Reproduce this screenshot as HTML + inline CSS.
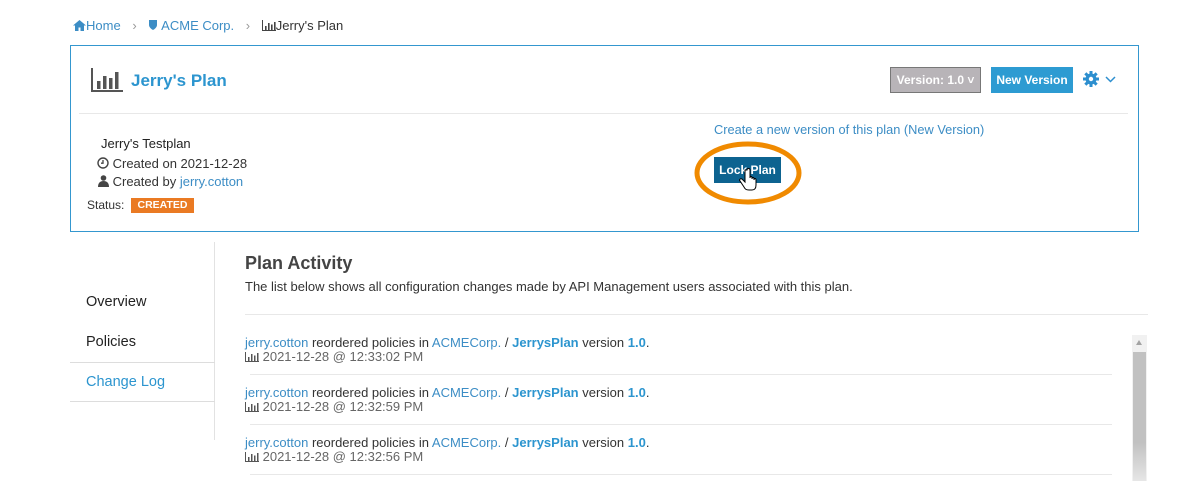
<!DOCTYPE html>
<html><head><meta charset="utf-8"><style>
*{margin:0;padding:0;box-sizing:border-box}
body{width:1183px;height:481px;background:#fff;font-family:"Liberation Sans",sans-serif;color:#333;position:relative;overflow:hidden;font-size:13px}
.a{position:absolute;white-space:nowrap}
.b{color:#3c8dc5}
.bl{color:#2c95cf}
.ic{display:inline-block;vertical-align:-1px}
.e1{font-size:13px;color:#333;letter-spacing:0}
.e2{font-size:13px;color:#666;letter-spacing:0}
.sep{position:absolute;height:1px;background:#e8e8e8}
</style></head><body>
<div class="a" style="left:73px;top:18px;font-size:13px">
<span class="b"><svg class="ic" width="13" height="11" viewBox="0 0 13 11"><path d="M6.5 0L0 5.5h2V11h3.5V7.5h2V11H11V5.5h2z" fill="#3c8dc5"/></svg>Home</span>
<span style="color:#999;margin:0 8px">›</span>
<span class="b"><svg class="ic" width="10" height="12" viewBox="0 0 10 12"><path d="M1 1h8v5c0 3-4 5-4 5S1 9 1 6z" fill="#3c8dc5"/></svg> ACME Corp.</span>
<span style="color:#999;margin:0 8px">›</span>
<span><svg class="ic" width="14" height="11" viewBox="0 0 14 11"><path d="M0.5 0v10.5H14" stroke="#444" fill="none"/><rect x="3" y="6" width="1.6" height="4" fill="#444"/><rect x="6" y="3" width="1.6" height="7" fill="#444"/><rect x="9" y="4.5" width="1.6" height="5.5" fill="#444"/><rect x="12" y="2" width="1.6" height="8" fill="#444"/></svg>Jerry's Plan</span>
</div>
<div class="a" style="left:70px;top:45px;width:1069px;height:187px;border:1px solid #3497cf"></div>
<svg class="a" style="left:91px;top:68px" width="32" height="24" viewBox="0 0 32 24"><path d="M1 0v23h31" stroke="#555" stroke-width="2" fill="none"/><rect x="6" y="13" width="3.5" height="8" fill="#555"/><rect x="12" y="8" width="3.5" height="13" fill="#555"/><rect x="18" y="10" width="3.5" height="11" fill="#555"/><rect x="24" y="4" width="3.5" height="17" fill="#555"/></svg>
<div class="a bl" style="left:131px;top:71px;font-size:17px;font-weight:bold">Jerry's Plan</div>
<div class="a" style="left:890px;top:67px;width:91px;height:26px;background:#b8b4b8;border:1px solid #777;color:#fff;font-weight:bold;font-size:12px;line-height:24px;text-align:center">Version: 1.0 ˅</div>
<div class="a" style="left:991px;top:67px;width:82px;height:26px;background:#2d9bd2;color:#fff;font-weight:bold;font-size:12px;line-height:26px;text-align:center">New Version</div>
<svg class="a" style="left:1083px;top:71px" width="16" height="16" viewBox="0 0 16 16"><g fill="#2d8fcf"><circle cx="8" cy="8" r="5.5"/><rect x="6.5" y="0" width="3" height="16"/><rect x="0" y="6.5" width="16" height="3"/><rect x="6.5" y="0" width="3" height="16" transform="rotate(45 8 8)"/><rect x="6.5" y="0" width="3" height="16" transform="rotate(-45 8 8)"/></g><circle cx="8" cy="8" r="2.2" fill="#fff"/></svg>
<svg class="a" style="left:1105px;top:76px" width="11" height="7" viewBox="0 0 11 7"><path d="M1 1l4.5 4.5L10 1" stroke="#2d8fcf" stroke-width="1.5" fill="none"/></svg>
<div class="sep" style="left:79px;top:113px;width:1049px"></div>
<div class="a" style="left:101px;top:136px;font-size:13px;color:#222">Jerry's Testplan</div>
<div class="a" style="left:97px;top:156px;font-size:13px;color:#333"><svg class="ic" width="12" height="12" viewBox="0 0 12 12"><circle cx="6" cy="6" r="5" stroke="#444" stroke-width="1.4" fill="none"/><path d="M6 3v3.2H4" stroke="#444" stroke-width="1.3" fill="none"/></svg> Created on 2021-12-28</div>
<div class="a" style="left:98px;top:174px;font-size:13px;color:#333"><svg class="ic" width="11" height="12" viewBox="0 0 11 12"><circle cx="5.5" cy="3" r="2.8" fill="#444"/><path d="M0 12c0-4 2-6 5.5-6S11 8 11 12z" fill="#444"/></svg> Created by <span class="b">jerry.cotton</span></div>
<div class="a" style="left:87px;top:198px;font-size:12px;color:#333">Status:</div>
<div class="a" style="left:131px;top:198px;width:63px;height:15px;background:#ea7a23;color:#fff;font-weight:bold;font-size:10.5px;line-height:15px;text-align:center">CREATED</div>
<div class="a b" style="left:714px;top:122px;font-size:12.8px">Create a new version of this plan (New Version)</div>
<div class="a" style="left:714px;top:157px;width:67px;height:26px;background:#0d6390;color:#fff;font-weight:bold;font-size:12px;line-height:26px;text-align:center">Lock Plan</div>
<svg class="a" style="left:693px;top:140px" width="110" height="66" viewBox="0 0 110 66"><ellipse cx="55" cy="33" rx="51" ry="29" stroke="#f08a00" stroke-width="5" fill="none"/><path d="M52 30v12l-3-3c-2-1-3 1-2 2l4 6c1 2 2 3 5 3h3c3 0 4-2 4-5v-5c0-2-2-2-2 0v-1c0-2-2-2-2 0v-1c0-2-2-2-2 0V30c0-2-3-2-3 0z" fill="#fff" stroke="#000" stroke-width="1"/></svg>
<div class="a" style="left:214px;top:242px;width:1px;height:198px;background:#e2e2e2"></div>
<div class="a" style="left:86px;top:294px;font-size:14.5px;color:#222">Overview</div>
<div class="a" style="left:86px;top:334px;font-size:14.5px;color:#222">Policies</div>
<div class="sep" style="left:70px;top:362px;width:145px;background:#ddd"></div>
<div class="a bl" style="left:86px;top:374px;font-size:14.5px">Change Log</div>
<div class="sep" style="left:70px;top:401px;width:145px;background:#ddd"></div>
<div class="a" style="left:245px;top:253px;font-size:18px;font-weight:bold;color:#444">Plan Activity</div>
<div class="a" style="left:245px;top:279px;font-size:13px;color:#333">The list below shows all configuration changes made by API Management users associated with this plan.</div>
<div class="sep" style="left:245px;top:314px;width:903px"></div>

<div class="a e1" style="left:245px;top:335px"><span class="b">jerry.cotton</span> reordered policies in <span class="b">ACMECorp.</span> / <b class="bl">JerrysPlan</b> version <b class="bl">1.0</b>.</div>
<div class="a e2" style="left:245px;top:349px"><svg class="ic" width="14" height="10" viewBox="0 0 14 10"><path d="M.5 0v9.5H14" stroke="#555" fill="none"/><rect x="3" y="5" width="1.5" height="4" fill="#555"/><rect x="6" y="2" width="1.5" height="7" fill="#555"/><rect x="9" y="3.5" width="1.5" height="5.5" fill="#555"/><rect x="12" y="1" width="1.5" height="8" fill="#555"/></svg> 2021-12-28 @ 12:33:02 PM</div>
<div class="sep" style="left:250px;top:374px;width:862px"></div>

<div class="a e1" style="left:245px;top:385px"><span class="b">jerry.cotton</span> reordered policies in <span class="b">ACMECorp.</span> / <b class="bl">JerrysPlan</b> version <b class="bl">1.0</b>.</div>
<div class="a e2" style="left:245px;top:399px"><svg class="ic" width="14" height="10" viewBox="0 0 14 10"><path d="M.5 0v9.5H14" stroke="#555" fill="none"/><rect x="3" y="5" width="1.5" height="4" fill="#555"/><rect x="6" y="2" width="1.5" height="7" fill="#555"/><rect x="9" y="3.5" width="1.5" height="5.5" fill="#555"/><rect x="12" y="1" width="1.5" height="8" fill="#555"/></svg> 2021-12-28 @ 12:32:59 PM</div>
<div class="sep" style="left:250px;top:424px;width:862px"></div>

<div class="a e1" style="left:245px;top:435px"><span class="b">jerry.cotton</span> reordered policies in <span class="b">ACMECorp.</span> / <b class="bl">JerrysPlan</b> version <b class="bl">1.0</b>.</div>
<div class="a e2" style="left:245px;top:449px"><svg class="ic" width="14" height="10" viewBox="0 0 14 10"><path d="M.5 0v9.5H14" stroke="#555" fill="none"/><rect x="3" y="5" width="1.5" height="4" fill="#555"/><rect x="6" y="2" width="1.5" height="7" fill="#555"/><rect x="9" y="3.5" width="1.5" height="5.5" fill="#555"/><rect x="12" y="1" width="1.5" height="8" fill="#555"/></svg> 2021-12-28 @ 12:32:56 PM</div>
<div class="sep" style="left:250px;top:474px;width:862px"></div>

<div class="a" style="left:1132px;top:335px;width:15px;height:146px;background:#f1f1f1"></div>
<div class="a" style="left:1136px;top:340px;width:0;height:0;border-left:3.5px solid transparent;border-right:3.5px solid transparent;border-bottom:5px solid #a3a3a3"></div>
<div class="a" style="left:1133px;top:352px;width:13px;height:129px;background:linear-gradient(#c1c1c1 70%,#e6e6e6)"></div>
</body></html>
